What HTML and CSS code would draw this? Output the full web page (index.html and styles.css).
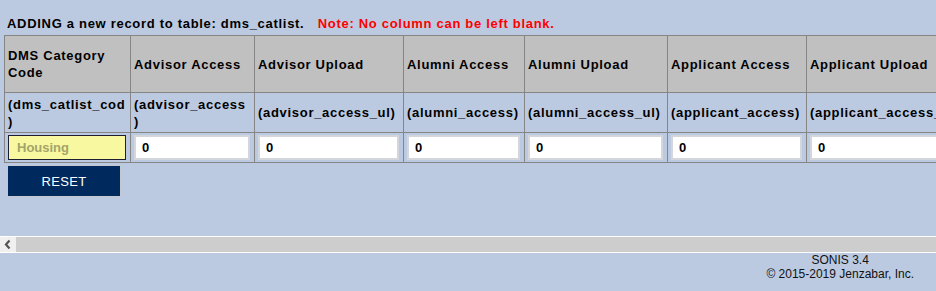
FILE: index.html
```html
<!DOCTYPE html>
<html>
<head>
    <title>Add Record - dms_catlist</title>
    <link rel="stylesheet" href="styles.css">
</head>
<body>
    <div class="wrap">
        <p class="title">ADDING a new record to table: dms_catlist. <span class="note">Note: No column can be left blank.</span></p>
        <table class="grid">
            <colgroup>
                <col class="c1"><col class="c2"><col class="c3"><col class="c4"><col class="c5"><col class="c6"><col class="c7">
            </colgroup>
            <tr class="head">
                <th>DMS Category Code</th>
                <th>Advisor Access</th>
                <th>Advisor Upload</th>
                <th>Alumni Access</th>
                <th>Alumni Upload</th>
                <th>Applicant Access</th>
                <th>Applicant Upload</th>
            </tr>
            <tr class="names">
                <td>(dms_catlist_cod)</td>
                <td>(advisor_access)</td>
                <td>(advisor_access_ul)</td>
                <td>(alumni_access)</td>
                <td>(alumni_access_ul)</td>
                <td>(applicant_access)</td>
                <td>(applicant_access_ul)</td>
            </tr>
            <tr class="vals">
                <td><input class="field key" type="text" placeholder="Housing"></td>
                <td><input class="field" type="text" value="0"></td>
                <td><input class="field" type="text" value="0"></td>
                <td><input class="field" type="text" value="0"></td>
                <td><input class="field" type="text" value="0"></td>
                <td><input class="field" type="text" value="0"></td>
                <td><input class="field" type="text" value="0"></td>
            </tr>
        </table>
        <button class="reset" type="reset">RESET</button>
    </div>

    <!-- horizontal scroller under the form -->
    <div class="hscroll">
        <span class="arrow">
            <svg width="16" height="15" viewBox="0 0 16 15"><polyline points="9.5,3.5 6,7.5 9.5,11.5" fill="none" stroke="#555" stroke-width="2.2"/></svg>
        </span>
        <span class="thumb"></span>
    </div>

    <div class="foot">
        <div class="sig">SONIS 3.4<br>&copy; 2015-2019 Jenzabar, Inc.</div>
    </div>
</body>
</html>
```

FILE: styles.css
```css
body {
    margin: 0;
    background-color: #bccae1;
    font-family: "Liberation Sans", Arial, sans-serif;
    color: #000;
}

.wrap {
    height: 236px;
    overflow: hidden;
    padding-left: 4px;
    box-sizing: border-box;
}

.title {
    margin: 0 0 4px 3px;
    padding-top: 16px;
    font-size: 13px;
    line-height: 15px;
    font-weight: bold;
    letter-spacing: 0.7px;
    white-space: nowrap;
}

.note {
    color: #ff0000;
    margin-left: 9px;
}

.grid {
    border-collapse: collapse;
    table-layout: fixed;
    width: 1012px;
    font-size: 13px;
    font-weight: bold;
    letter-spacing: 0.7px;
    line-height: 17px;
}

.c1 { width: 126px; }
.c2 { width: 124px; }
.c3 { width: 149px; }
.c4 { width: 121px; }
.c5 { width: 143px; }
.c6 { width: 139px; }
.c7 { width: 210px; }

.grid th,
.grid td {
    border: 1px solid #858585;
    padding: 0 4px 0 3px;
    text-align: left;
    vertical-align: middle;
    overflow-wrap: anywhere;
}

.head th {
    background-color: #c0c0c0;
    height: 56px;
}

.names td {
    height: 39px;
    white-space: normal;
}

.vals td {
    height: 29px;
}

.field {
    display: block;
    width: 100%;
    height: 25px;
    box-sizing: border-box;
    margin: 0;
    padding: 0 0 0 6px;
    border: 2px solid #d3d6da;
    background-color: #fff;
    font-family: "Liberation Sans", Arial, sans-serif;
    font-size: 13px;
    font-weight: bold;
    color: #000;
}

.key {
    border: 1px solid #1e1e30;
    background-color: #f8f8a0;
    padding-left: 8px;
}

.key::placeholder {
    color: #a4a46a;
}

.reset {
    display: block;
    margin: 2px 0 0 3px;
    width: 114px;
    height: 32px;
    background-color: #002a5e;
    border: 1px solid #c3c8d0;
    color: #fff;
    font-family: "Liberation Sans", Arial, sans-serif;
    font-size: 13px;
    letter-spacing: 0.3px;
    cursor: pointer;
}

.hscroll {
    display: flex;
    height: 15px;
    border-top: 1px solid #fff;
    border-bottom: 1px solid #fff;
}

.arrow {
    width: 16px;
    background-color: #f0f0f0;
}

.arrow svg {
    display: block;
}

.thumb {
    flex: 1;
    background-color: #cdcdcd;
}

.foot {
    display: flex;
    justify-content: flex-end;
    padding-right: 22px;
}

.sig {
    text-align: center;
    font-size: 12px;
    line-height: 14px;
    color: #111;
}
```
